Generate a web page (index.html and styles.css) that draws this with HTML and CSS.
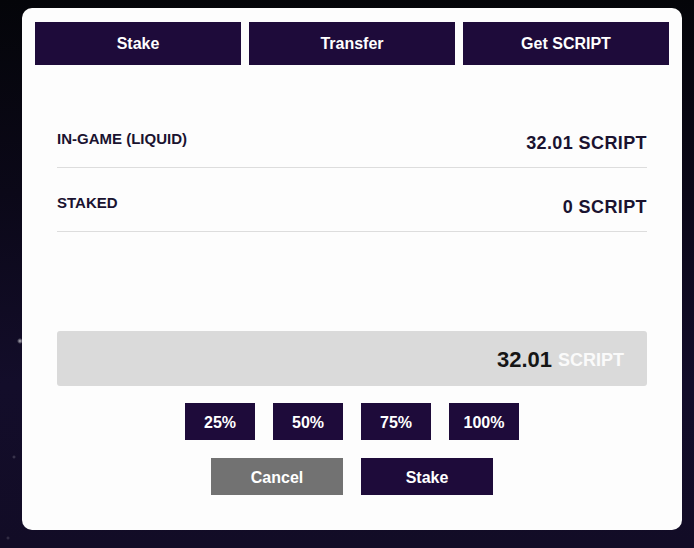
FILE: index.html
```html
<!DOCTYPE html>
<html>
<head>
<meta charset="utf-8">
<link rel="stylesheet" href="styles.css">
</head>
<body>
<div class="card">
  <div class="tabs">
    <div class="tab">Stake</div>
    <div class="tab">Transfer</div>
    <div class="tab">Get SCRIPT</div>
  </div>
  <div class="content">
    <div class="row">
      <div class="label">IN-GAME (LIQUID)</div>
      <div class="value">32.01 SCRIPT</div>
    </div>
    <div class="row">
      <div class="label">STAKED</div>
      <div class="value">0 SCRIPT</div>
    </div>
    <div class="amount">
      <span class="num">32.01</span><span class="unit">SCRIPT</span>
    </div>
    <div class="pcts">
      <div class="btn pct">25%</div>
      <div class="btn pct">50%</div>
      <div class="btn pct">75%</div>
      <div class="btn pct">100%</div>
    </div>
    <div class="actions">
      <div class="btn act cancel">Cancel</div>
      <div class="btn act">Stake</div>
    </div>
  </div>
</div>
</body>
</html>
```
FILE: styles.css
```css
html, body {
  height: 100%;
}
body {
  margin: 0;
  padding: 8px 12px 0 22px;
  box-sizing: border-box;
  font-family: "Liberation Sans", Arial, sans-serif;
  background:
    radial-gradient(circle at 20px 341px, rgba(255,255,255,0.7) 0, rgba(255,255,255,0) 3px),
    radial-gradient(circle at 14px 457px, rgba(255,255,255,0.25) 0, rgba(255,255,255,0) 2px),
    radial-gradient(circle at 8px 538px, rgba(255,255,255,0.2) 0, rgba(255,255,255,0) 2px),
    linear-gradient(180deg, #040509 0%, #0b0818 35%, #130d2a 70%, #120c26 100%);
}
.card {
  width: 660px;
  height: 522px;
  box-sizing: border-box;
  background: #fdfdfd;
  border-radius: 10px;
  padding: 14px 13px 0;
}
.tabs {
  display: grid;
  grid-template-columns: repeat(3, 1fr);
  gap: 8px;
}
.tab {
  height: 43px;
  background: #1e0b3a;
  color: #fff;
  font-weight: bold;
  font-size: 16px;
  display: flex;
  align-items: center;
  justify-content: center;
}
.content {
  padding: 39px 22px 0;
}
.row {
  height: 64px;
  box-sizing: border-box;
  border-bottom: 1px solid #dddddd;
  display: flex;
  justify-content: space-between;
  align-items: flex-start;
  padding-top: 26px;
  color: #1a1330;
  font-weight: bold;
}
.label {
  font-size: 15px;
  line-height: 18px;
}
.value {
  font-size: 18px;
  line-height: 22px;
  margin-top: 2px;
  letter-spacing: 0.4px;
}
.amount {
  margin-top: 99px;
  height: 55px;
  background: #dadada;
  border-radius: 3px;
  display: flex;
  justify-content: flex-end;
  align-items: center;
  padding-right: 23px;
  padding-top: 2px;
  box-sizing: border-box;
  gap: 6px;
  font-weight: bold;
}
.num {
  font-size: 22px;
  color: #151515;
}
.unit {
  font-size: 18px;
  color: #fafafa;
  margin-top: 2px;
}
.pcts, .actions {
  display: flex;
  justify-content: center;
  gap: 18px;
}
.pcts {
  margin-top: 17px;
}
.actions {
  margin-top: 18px;
}
.btn {
  height: 37px;
  box-sizing: border-box;
  padding-top: 2px;
  background: #1e0b3a;
  color: #fff;
  font-weight: bold;
  font-size: 16px;
  display: flex;
  align-items: center;
  justify-content: center;
}
.pct {
  width: 70px;
}
.act {
  width: 132px;
}
.cancel {
  background: #727272;
}
```
